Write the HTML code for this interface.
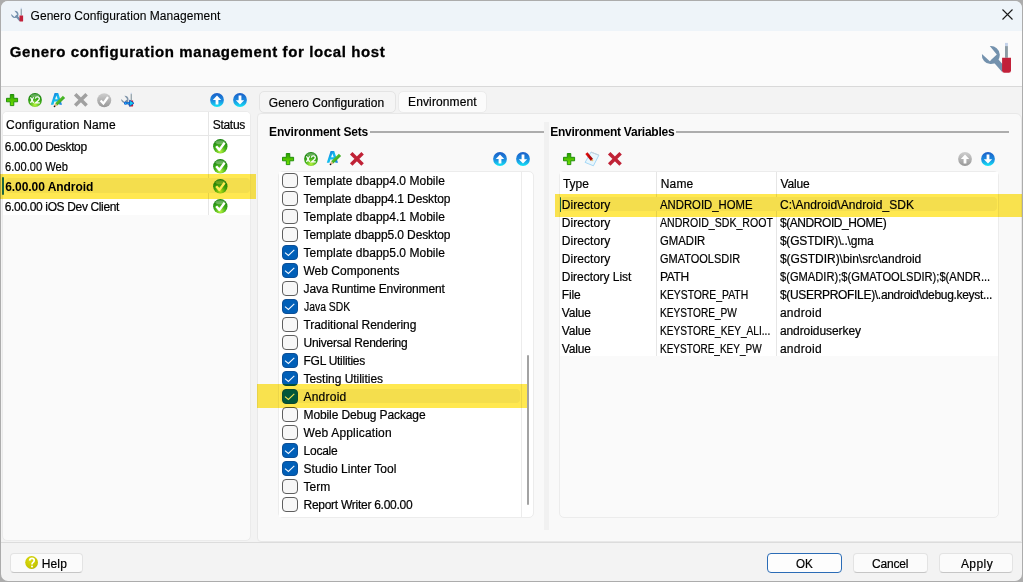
<!DOCTYPE html>
<html><head><meta charset="utf-8">
<style>
*{box-sizing:border-box;margin:0;padding:0}
html,body{width:1023px;height:582px;overflow:hidden;background:#acacac}
body{position:relative;font-family:"Liberation Sans",sans-serif;font-size:12px;color:#1a1a1a}
.a{position:absolute}
.t{position:absolute;white-space:nowrap;font-size:12px;color:#000;-webkit-text-stroke:0.2px #000}
.tb{-webkit-text-stroke:0}
.panel{position:absolute;background:#fafafa;border:1px solid #e5e5e5;border-radius:5px}
.wh{position:absolute;background:#ffffff}
.btn{position:absolute;height:20px;background:#fbfbfb;border:1px solid #e3e3e3;border-bottom-color:#c6c6c6;border-radius:4px}
.hl{position:absolute;background:#ffe850;mix-blend-mode:multiply}
.gl{position:absolute;height:2px;background:#adadad}
.cb{position:absolute;width:15.4px;height:15.2px;border:1px solid #5e5e5e;border-radius:4px;background:#f7f7f7}
.cb.on{background:#005fb8;border-color:#0d4f96}
.vl{position:absolute;width:1px;background:#e6e6e6}
.hlin{position:absolute;height:1px;background:#e6e6e6}
svg{position:absolute;overflow:visible}

</style></head><body>
<div class="a" style="left:1px;top:1px;width:1021px;height:580px;border-radius:7px;overflow:hidden;background:#f3f3f3">
<div class="a" style="left:0;top:0;width:1021px;height:30px;background:#eef4f9"></div>
<div class="a" style="left:0;top:30px;width:1021px;height:55px;background:#fbfbfb"></div>
<div class="a" style="left:0;top:85px;width:1021px;height:1px;background:#d9d9d9"></div>
<div class="a" style="left:0;top:541px;width:1021px;height:1px;background:#dcdcdc"></div>
</div>
<div class="t" style="left:30.5px;top:10px;font-size:12px;line-height:12px;color:#000;-webkit-text-stroke:0.1px #000;letter-spacing:0.059px">Genero Configuration Management</div>
<div class="t" style="left:9.8px;top:44.3px;font-size:15px;line-height:15px;font-weight:bold;-webkit-text-stroke:0;color:#000;-webkit-text-stroke:0.3px #000;letter-spacing:0.608px">Genero configuration management for local host</div>
<div class="panel" style="left:2px;top:111px;width:249px;height:430px;border-radius:5px;border-color:#ebebeb"></div>
<div class="wh" style="left:3px;top:112px;width:247px;height:103px;border-radius:4px 4px 0 0"></div>
<div class="hlin" style="left:3px;top:135px;width:247px"></div>
<div class="vl" style="left:208px;top:112px;height:103px"></div>
<div class="t" style="left:6.1px;top:119px;font-size:12px;line-height:12px;letter-spacing:0.169px">Configuration Name</div>
<div class="t" style="left:212.7px;top:119px;font-size:12px;line-height:12px;letter-spacing:-0.286px">Status</div>
<div class="t" style="left:4.8px;top:141px;font-size:12px;line-height:12px;letter-spacing:-0.365px">6.00.00 Desktop</div>
<div class="t" style="left:4.8px;top:161px;font-size:12px;line-height:12px;transform:scaleX(0.9260);transform-origin:0 0">6.00.00 Web</div>
<div class="a" style="left:5px;top:178px;width:245px;height:15px;border-radius:4px;background:#f4f4f4"></div>
<div class="a" style="left:2px;top:177px;width:1.6px;height:18px;border-radius:1px;background:#1a6fd0"></div>
<div class="t" style="left:5.2px;top:181px;font-size:12px;line-height:12px;font-weight:bold;-webkit-text-stroke:0;color:#000;letter-spacing:-0.059px">6.00.00 Android</div>
<div class="t" style="left:4.8px;top:201px;font-size:12px;line-height:12px;letter-spacing:-0.355px">6.00.00 iOS Dev Client</div>
<div class="a" style="left:259px;top:91px;width:137px;height:22px;background:#f5f5f5;border:1px solid #e4e4e4;border-radius:5px"></div>
<div class="a" style="left:398px;top:91px;width:89px;height:22px;background:#fbfbfb;border:1px solid #ebebeb;border-radius:5px"></div>
<div class="t" style="left:268.8px;top:97px;font-size:12px;line-height:12px;letter-spacing:0.029px">Genero Configuration</div>
<div class="t" style="left:408.0px;top:96px;font-size:12px;line-height:12px;letter-spacing:0.133px">Environment</div>
<div class="panel" style="left:257px;top:113px;width:765px;height:429px;background:#f9f9f9;border-color:#e8e8e8;border-radius:4px 6px 0 4px"></div>
<div class="a" style="left:544px;top:122px;width:5px;height:408px;background:#f1f1f1"></div>
<div class="t" style="left:269.1px;top:126px;font-size:12px;line-height:12px;font-weight:bold;-webkit-text-stroke:0;color:#000;letter-spacing:-0.195px">Environment Sets</div>
<div class="gl" style="left:370px;top:131px;width:174px"></div>
<div class="panel" style="left:278px;top:171px;width:256px;height:347px;background:#ffffff;border-color:#ececec;border-radius:5px"></div>
<div class="wh" style="left:279px;top:172px;width:242px;height:345px"></div>
<div class="a" style="left:521px;top:172px;width:1px;height:345px;background:#ececec"></div>
<div class="a" style="left:527px;top:355px;width:2px;height:150px;border-radius:1px;background:#a3a3a3"></div>
<div class="cb" style="left:282.2px;top:172.5px"></div>
<div class="t" style="left:303.5px;top:175px;font-size:12px;line-height:12px;letter-spacing:0.028px">Template dbapp4.0 Mobile</div>
<div class="cb" style="left:282.2px;top:190.5px"></div>
<div class="t" style="left:303.5px;top:193px;font-size:12px;line-height:12px;letter-spacing:-0.102px">Template dbapp4.1 Desktop</div>
<div class="cb" style="left:282.2px;top:208.5px"></div>
<div class="t" style="left:303.5px;top:211px;font-size:12px;line-height:12px;letter-spacing:0.028px">Template dbapp4.1 Mobile</div>
<div class="cb" style="left:282.2px;top:226.5px"></div>
<div class="t" style="left:303.5px;top:229px;font-size:12px;line-height:12px;letter-spacing:-0.102px">Template dbapp5.0 Desktop</div>
<div class="cb on" style="left:282.2px;top:244.5px"></div>
<svg style="left:282.2px;top:244.5px" width="15" height="15"><path d="M3 7.6 L6.4 10.5 L12.3 4.8" fill="none" stroke="#f4f8ff" stroke-width="1.1"/></svg>
<div class="t" style="left:303.5px;top:247px;font-size:12px;line-height:12px;letter-spacing:0.028px">Template dbapp5.0 Mobile</div>
<div class="cb on" style="left:282.2px;top:262.5px"></div>
<svg style="left:282.2px;top:262.5px" width="15" height="15"><path d="M3 7.6 L6.4 10.5 L12.3 4.8" fill="none" stroke="#f4f8ff" stroke-width="1.1"/></svg>
<div class="t" style="left:303.5px;top:265px;font-size:12px;line-height:12px;letter-spacing:0.004px">Web Components</div>
<div class="cb" style="left:282.2px;top:280.5px"></div>
<div class="t" style="left:303.5px;top:283px;font-size:12px;line-height:12px;letter-spacing:-0.116px">Java Runtime Environment</div>
<div class="cb on" style="left:282.2px;top:298.5px"></div>
<svg style="left:282.2px;top:298.5px" width="15" height="15"><path d="M3 7.6 L6.4 10.5 L12.3 4.8" fill="none" stroke="#f4f8ff" stroke-width="1.1"/></svg>
<div class="t" style="left:303.5px;top:301px;font-size:12px;line-height:12px;transform:scaleX(0.8666);transform-origin:0 0">Java SDK</div>
<div class="cb" style="left:282.2px;top:316.5px"></div>
<div class="t" style="left:303.5px;top:319px;font-size:12px;line-height:12px;letter-spacing:-0.070px">Traditional Rendering</div>
<div class="cb" style="left:282.2px;top:334.5px"></div>
<div class="t" style="left:303.5px;top:337px;font-size:12px;line-height:12px;letter-spacing:-0.252px">Universal Rendering</div>
<div class="cb on" style="left:282.2px;top:352.5px"></div>
<svg style="left:282.2px;top:352.5px" width="15" height="15"><path d="M3 7.6 L6.4 10.5 L12.3 4.8" fill="none" stroke="#f4f8ff" stroke-width="1.1"/></svg>
<div class="t" style="left:303.5px;top:355px;font-size:12px;line-height:12px;letter-spacing:-0.267px">FGL Utilities</div>
<div class="cb on" style="left:282.2px;top:370.5px"></div>
<svg style="left:282.2px;top:370.5px" width="15" height="15"><path d="M3 7.6 L6.4 10.5 L12.3 4.8" fill="none" stroke="#f4f8ff" stroke-width="1.1"/></svg>
<div class="t" style="left:303.5px;top:373px;font-size:12px;line-height:12px;letter-spacing:-0.027px">Testing Utilities</div>
<div class="a" style="left:280px;top:389px;width:240px;height:14px;border-radius:4px;background:#f4f4f4"></div>
<div class="cb on" style="left:282.2px;top:388.5px"></div>
<svg style="left:282.2px;top:388.5px" width="15" height="15"><path d="M3 7.6 L6.4 10.5 L12.3 4.8" fill="none" stroke="#f4f8ff" stroke-width="1.1"/></svg>
<div class="t" style="left:303.5px;top:391px;font-size:12px;line-height:12px;letter-spacing:0.221px">Android</div>
<div class="cb" style="left:282.2px;top:406.5px"></div>
<div class="t" style="left:303.5px;top:409px;font-size:12px;line-height:12px;letter-spacing:-0.104px">Mobile Debug Package</div>
<div class="cb" style="left:282.2px;top:424.5px"></div>
<div class="t" style="left:303.5px;top:427px;font-size:12px;line-height:12px;letter-spacing:0.161px">Web Application</div>
<div class="cb on" style="left:282.2px;top:442.5px"></div>
<svg style="left:282.2px;top:442.5px" width="15" height="15"><path d="M3 7.6 L6.4 10.5 L12.3 4.8" fill="none" stroke="#f4f8ff" stroke-width="1.1"/></svg>
<div class="t" style="left:303.5px;top:445px;font-size:12px;line-height:12px;letter-spacing:-0.235px">Locale</div>
<div class="cb on" style="left:282.2px;top:460.5px"></div>
<svg style="left:282.2px;top:460.5px" width="15" height="15"><path d="M3 7.6 L6.4 10.5 L12.3 4.8" fill="none" stroke="#f4f8ff" stroke-width="1.1"/></svg>
<div class="t" style="left:303.5px;top:463px;font-size:12px;line-height:12px;letter-spacing:0.023px">Studio Linter Tool</div>
<div class="cb" style="left:282.2px;top:478.5px"></div>
<div class="t" style="left:303.5px;top:481px;font-size:12px;line-height:12px;letter-spacing:0.043px">Term</div>
<div class="cb" style="left:282.2px;top:496.5px"></div>
<div class="t" style="left:303.5px;top:499px;font-size:12px;line-height:12px;letter-spacing:-0.270px">Report Writer 6.00.00</div>
<div class="t" style="left:550.2px;top:126px;font-size:12px;line-height:12px;font-weight:bold;-webkit-text-stroke:0;color:#000;letter-spacing:-0.250px">Environment Variables</div>
<div class="gl" style="left:676px;top:131px;width:333px"></div>
<div class="panel" style="left:559px;top:171px;width:440px;height:347px;background:#fafafa;border-color:#ececec;border-radius:5px"></div>
<div class="wh" style="left:560px;top:172px;width:438px;height:184px"></div>
<div class="vl" style="left:656px;top:172px;height:184px"></div>
<div class="vl" style="left:776px;top:172px;height:184px"></div>
<div class="t" style="left:562.9px;top:178px;font-size:12px;line-height:12px;letter-spacing:-0.005px">Type</div>
<div class="t" style="left:660.8px;top:178px;font-size:12px;line-height:12px;letter-spacing:0.161px">Name</div>
<div class="t" style="left:780.5px;top:178px;font-size:12px;line-height:12px;letter-spacing:-0.153px">Value</div>
<div class="a" style="left:561px;top:197px;width:436px;height:14px;border-radius:4px;background:#f4f4f4"></div>
<div class="a" style="left:559.5px;top:197px;width:1.6px;height:15px;border-radius:1px;background:#1a6fd0"></div>
<div class="t" style="left:561.8px;top:199px;font-size:12px;line-height:12px;letter-spacing:0.061px">Directory</div>
<div class="t" style="left:660.1px;top:199px;font-size:12px;line-height:12px;transform:scaleX(0.9441);transform-origin:0 0">ANDROID_HOME</div>
<div class="t" style="left:779.9px;top:199px;font-size:12px;line-height:12px;letter-spacing:0.069px">C:\Android\Android_SDK</div>
<div class="t" style="left:561.8px;top:217px;font-size:12px;line-height:12px;letter-spacing:0.061px">Directory</div>
<div class="t" style="left:660.1px;top:217px;font-size:12px;line-height:12px;transform:scaleX(0.8823);transform-origin:0 0">ANDROID_SDK_ROOT</div>
<div class="t" style="left:779.9px;top:217px;font-size:12px;line-height:12px;letter-spacing:-0.421px">$(ANDROID_HOME)</div>
<div class="t" style="left:561.8px;top:235px;font-size:12px;line-height:12px;letter-spacing:0.061px">Directory</div>
<div class="t" style="left:660.1px;top:235px;font-size:12px;line-height:12px;transform:scaleX(0.9423);transform-origin:0 0">GMADIR</div>
<div class="t" style="left:779.9px;top:235px;font-size:12px;line-height:12px;letter-spacing:-0.192px">$(GSTDIR)\..\gma</div>
<div class="t" style="left:561.8px;top:253px;font-size:12px;line-height:12px;letter-spacing:0.061px">Directory</div>
<div class="t" style="left:660.1px;top:253px;font-size:12px;line-height:12px;transform:scaleX(0.9157);transform-origin:0 0">GMATOOLSDIR</div>
<div class="t" style="left:779.9px;top:253px;font-size:12px;line-height:12px;letter-spacing:-0.031px">$(GSTDIR)\bin\src\android</div>
<div class="t" style="left:561.8px;top:271px;font-size:12px;line-height:12px;letter-spacing:-0.032px">Directory List</div>
<div class="t" style="left:660.1px;top:271px;font-size:12px;line-height:12px;letter-spacing:-0.378px">PATH</div>
<div class="t" style="left:779.9px;top:271px;font-size:12px;line-height:12px;transform:scaleX(0.9291);transform-origin:0 0">$(GMADIR);$(GMATOOLSDIR);$(ANDR...</div>
<div class="t" style="left:561.8px;top:289px;font-size:12px;line-height:12px;letter-spacing:-0.148px">File</div>
<div class="t" style="left:660.1px;top:289px;font-size:12px;line-height:12px;transform:scaleX(0.8638);transform-origin:0 0">KEYSTORE_PATH</div>
<div class="t" style="left:779.9px;top:289px;font-size:12px;line-height:12px;letter-spacing:-0.314px">$(USERPROFILE)\.android\debug.keyst...</div>
<div class="t" style="left:561.8px;top:307px;font-size:12px;line-height:12px;letter-spacing:-0.153px">Value</div>
<div class="t" style="left:660.1px;top:307px;font-size:12px;line-height:12px;transform:scaleX(0.8439);transform-origin:0 0">KEYSTORE_PW</div>
<div class="t" style="left:779.9px;top:307px;font-size:12px;line-height:12px;letter-spacing:0.278px">android</div>
<div class="t" style="left:561.8px;top:325px;font-size:12px;line-height:12px;letter-spacing:-0.153px">Value</div>
<div class="t" style="left:660.1px;top:325px;font-size:12px;line-height:12px;transform:scaleX(0.8444);transform-origin:0 0">KEYSTORE_KEY_ALI...</div>
<div class="t" style="left:779.9px;top:325px;font-size:12px;line-height:12px;letter-spacing:-0.074px">androiduserkey</div>
<div class="t" style="left:561.8px;top:343px;font-size:12px;line-height:12px;letter-spacing:-0.153px">Value</div>
<div class="t" style="left:660.1px;top:343px;font-size:12px;line-height:12px;transform:scaleX(0.8340);transform-origin:0 0">KEYSTORE_KEY_PW</div>
<div class="t" style="left:779.9px;top:343px;font-size:12px;line-height:12px;letter-spacing:0.278px">android</div>
<div class="btn" style="left:10px;top:553px;width:73px"></div>
<div class="t" style="left:41.7px;top:558px;font-size:12px;line-height:12px;letter-spacing:0.171px">Help</div>
<div class="btn" style="left:767px;top:553px;width:75px;border:1.5px solid #2b6cb6;background:#fdfdfd"></div>
<div class="t" style="left:795.9px;top:558px;font-size:12px;line-height:12px;transform:scaleX(0.9663);transform-origin:0 0">OK</div>
<div class="btn" style="left:853px;top:553px;width:75px"></div>
<div class="t" style="left:872.1px;top:558px;font-size:12px;line-height:12px;letter-spacing:-0.192px">Cancel</div>
<div class="btn" style="left:939px;top:553px;width:74px"></div>
<div class="t" style="left:960.9px;top:558px;font-size:12px;line-height:12px;letter-spacing:0.442px">Apply</div>
<svg width="0" height="0" style="position:absolute"><defs>
<radialGradient id="gg" cx="0.5" cy="0.85" r="0.75"><stop offset="0" stop-color="#b8f43c"/><stop offset="0.5" stop-color="#46b21c"/><stop offset="1" stop-color="#1a850e"/></radialGradient>
<linearGradient id="bg" x1="0" y1="0" x2="0" y2="1"><stop offset="0" stop-color="#1a5fc8"/><stop offset="0.55" stop-color="#1c8de0"/><stop offset="1" stop-color="#12e6f6"/></linearGradient>
<linearGradient id="gy" x1="0" y1="0" x2="0" y2="1"><stop offset="0" stop-color="#cfcfcf"/><stop offset="1" stop-color="#989898"/></linearGradient>
<radialGradient id="yg" cx="0.4" cy="0.35" r="0.75"><stop offset="0" stop-color="#dcdc10"/><stop offset="0.8" stop-color="#c4c400"/><stop offset="1" stop-color="#909000"/></radialGradient>
<linearGradient id="pg" x1="0" y1="0" x2="0" y2="1"><stop offset="0" stop-color="#2aa000"/><stop offset="1" stop-color="#74e400"/></linearGradient>
<linearGradient id="ab" x1="0" y1="0" x2="1" y2="1"><stop offset="0" stop-color="#1a62d8"/><stop offset="0.5" stop-color="#10c0ee"/><stop offset="1" stop-color="#1a7ae0"/></linearGradient>
<linearGradient id="pen" x1="0" y1="0" x2="1" y2="1"><stop offset="0" stop-color="#80e040"/><stop offset="1" stop-color="#128a10"/></linearGradient>
<linearGradient id="red" x1="0" y1="0" x2="1" y2="0"><stop offset="0" stop-color="#e01010"/><stop offset="1" stop-color="#a00000"/></linearGradient>
</defs></svg>
<svg style="left:9.9px;top:9.0px" width="13.94" height="13.12" viewBox="0 0 34 32"><path d="M10.8 4.1 A9 9 0 1 1 2.9 12 L10.8 19.3 L17.8 12.6 Z" fill="#7391ad"/><path d="M14.5 16 L25 28" stroke="#7391ad" stroke-width="5.6"/><rect x="26" y="-3" width="2.9" height="3.2" fill="#c4d2ea"/><rect x="26" y="0.20000000000000018" width="2.9" height="15.600000000000001" fill="#8c9ca5"/><path d="M23.1 15.8 H32 V28.5 Q32 30.7 29.8 30.7 H25.3 Q23.1 30.7 23.1 28.5 Z" fill="#c2213a"/></svg>
<svg style="left:1001.5px;top:9px" width="11" height="11" viewBox="0 0 11 11"><path d="M0.5 0.5 L10.5 10.5 M10.5 0.5 L0.5 10.5" stroke="#1a1a1a" stroke-width="1.1"/></svg>
<svg style="left:979px;top:42px" width="34.00" height="32.00" viewBox="0 0 34 32"><path d="M10.8 4.1 A9 9 0 1 1 2.9 12 L10.8 19.3 L17.8 12.6 Z" fill="#7391ad"/><path d="M14.5 16 L25 28" stroke="#7391ad" stroke-width="5.6"/><rect x="26" y="0.9" width="2.9" height="3.2" fill="#c4d2ea"/><rect x="26" y="4.1000000000000005" width="2.9" height="11.7" fill="#8c9ca5"/><path d="M23.1 15.8 H32 V28.5 Q32 30.7 29.8 30.7 H25.3 Q23.1 30.7 23.1 28.5 Z" fill="#c2213a"/></svg>
<svg style="left:6px;top:94px" width="13" height="13" viewBox="0 0 13 13"><path d="M4.3 0.5h3.5v3.8h3.8v3.5h-3.8v3.8h-3.5v-3.8h-3.8v-3.5h3.8z" fill="url(#pg)" stroke="#168a00" stroke-width="0.9"/></svg>
<svg style="left:28px;top:93px" width="14" height="14" viewBox="0 0 14 14"><circle cx="7" cy="7" r="6.9" fill="url(#gg)"/><ellipse cx="7" cy="2.6" rx="4.6" ry="1.6" fill="#fff" opacity="0.3"/><path d="M2.5 4.3 L5.6 9.9 M5.6 4.3 L2.5 9.9" stroke="#fff" stroke-width="1.3"/><path d="M7.3 5.6 Q7.7 3.9 9.4 3.9 Q11.3 3.9 11.3 5.7 Q11.3 6.9 9.8 7.9 L7.6 9.8 L11.8 9.8" fill="none" stroke="#fff" stroke-width="1.3"/></svg>
<svg style="left:48px;top:91px" width="20" height="18" viewBox="0 0 20 18"><path fill-rule="evenodd" d="M2.8 13.8 L6.6 2 L10.2 2 L14 13.8 L11.4 13.8 L10.4 10.6 L6.4 10.6 L5.4 13.8 Z M7.1 8.3 L9.7 8.3 L8.4 4.4 Z" fill="url(#ab)"/><path d="M7.1 12.15 L14.9 4.65 L17.1 6.95 L9.3 14.45 Z" fill="url(#pen)"/><path d="M7.1 12.15 L9.3 14.45 L6.1 15.9 Z" fill="#e8b080"/><circle cx="6.5" cy="15.4" r="0.8" fill="#111"/></svg>
<svg style="left:73px;top:92px" width="16" height="16" viewBox="0 0 16 16"><path d="M2.2 2.2 L13.6 13.6 M13.6 2.2 L2.2 13.6" stroke="#a0a0a0" stroke-width="3.5"/></svg>
<svg style="left:97px;top:93px" width="15" height="15" viewBox="0 0 15 15"><circle cx="7.2" cy="7.2" r="7" fill="url(#gy)"/><path d="M3.6 7.4 L6.4 10.4 L11 4" fill="none" stroke="#fff" stroke-width="2.2"/></svg>
<svg style="left:119.9px;top:94.0px" width="13.94" height="13.12" viewBox="0 0 34 32"><path d="M10.8 4.1 A9 9 0 1 1 2.9 12 L10.8 19.3 L17.8 12.6 Z" fill="#7e93a8"/><path d="M14.5 16 L25 28" stroke="#7e93a8" stroke-width="5.6"/><rect x="26" y="-3" width="2.9" height="3.2" fill="#c4d2ea"/><rect x="26" y="0.20000000000000018" width="2.9" height="15.600000000000001" fill="#8c9ca5"/><path d="M23.1 15.8 H32 V28.5 Q32 30.7 29.8 30.7 H25.3 Q23.1 30.7 23.1 28.5 Z" fill="#c2213a"/></svg>
<svg style="left:117px;top:90px" width="20" height="20" viewBox="0 0 20 20"><path d="M10.2 13.2 L13 13.2" stroke="#1050c8" stroke-width="2.2"/><path d="M10.4 13.2 L12.8 13.2" stroke="#18d0f4" stroke-width="0.9"/><circle cx="8.6" cy="13.2" r="1.6" fill="#1060d8"/><circle cx="8.6" cy="13.2" r="0.7" fill="#20c8f0"/><path d="M12.6 10.2 L17 13.2 L12.6 16.3 Z" fill="#14d0f4" stroke="#1050c0" stroke-width="0.8"/></svg>
<svg style="left:210px;top:93px" width="14" height="14" viewBox="0 0 14 14"><circle cx="7" cy="7" r="6.9" fill="url(#bg)"/><path d="M7 2.6 L11.2 7 L8.4 7 L8.4 11.6 L5.6 11.6 L5.6 7 L2.8 7 Z" fill="#fff"/></svg>
<svg style="left:233px;top:93px" width="14" height="14" viewBox="0 0 14 14"><circle cx="7" cy="7" r="6.9" fill="url(#bg)"/><path d="M7 11.6 L11.2 7.2 L8.4 7.2 L8.4 2.5 L5.6 2.5 L5.6 7.2 L2.8 7.2 Z" fill="#fff"/></svg>
<svg style="left:212.5px;top:138.5px" width="15" height="15" viewBox="0 0 15 15"><circle cx="7.3" cy="7.3" r="7.2" fill="url(#gg)"/><ellipse cx="7.3" cy="3.2" rx="4.8" ry="2" fill="#fff" opacity="0.3"/><path d="M3.2 7.2 L6.4 10.9 L11.6 3.8" fill="none" stroke="#fff" stroke-width="2.4" stroke-linejoin="round"/></svg>
<svg style="left:212.5px;top:158.5px" width="15" height="15" viewBox="0 0 15 15"><circle cx="7.3" cy="7.3" r="7.2" fill="url(#gg)"/><ellipse cx="7.3" cy="3.2" rx="4.8" ry="2" fill="#fff" opacity="0.3"/><path d="M3.2 7.2 L6.4 10.9 L11.6 3.8" fill="none" stroke="#fff" stroke-width="2.4" stroke-linejoin="round"/></svg>
<svg style="left:212.5px;top:178.5px" width="15" height="15" viewBox="0 0 15 15"><circle cx="7.3" cy="7.3" r="7.2" fill="url(#gg)"/><ellipse cx="7.3" cy="3.2" rx="4.8" ry="2" fill="#fff" opacity="0.3"/><path d="M3.2 7.2 L6.4 10.9 L11.6 3.8" fill="none" stroke="#fff" stroke-width="2.4" stroke-linejoin="round"/></svg>
<svg style="left:212.5px;top:198.5px" width="15" height="15" viewBox="0 0 15 15"><circle cx="7.3" cy="7.3" r="7.2" fill="url(#gg)"/><ellipse cx="7.3" cy="3.2" rx="4.8" ry="2" fill="#fff" opacity="0.3"/><path d="M3.2 7.2 L6.4 10.9 L11.6 3.8" fill="none" stroke="#fff" stroke-width="2.4" stroke-linejoin="round"/></svg>
<svg style="left:282px;top:153px" width="13" height="13" viewBox="0 0 13 13"><path d="M4.3 0.5h3.5v3.8h3.8v3.5h-3.8v3.8h-3.5v-3.8h-3.8v-3.5h3.8z" fill="url(#pg)" stroke="#168a00" stroke-width="0.9"/></svg>
<svg style="left:304px;top:152px" width="14" height="14" viewBox="0 0 14 14"><circle cx="7" cy="7" r="6.9" fill="url(#gg)"/><ellipse cx="7" cy="2.6" rx="4.6" ry="1.6" fill="#fff" opacity="0.3"/><path d="M2.5 4.3 L5.6 9.9 M5.6 4.3 L2.5 9.9" stroke="#fff" stroke-width="1.3"/><path d="M7.3 5.6 Q7.7 3.9 9.4 3.9 Q11.3 3.9 11.3 5.7 Q11.3 6.9 9.8 7.9 L7.6 9.8 L11.8 9.8" fill="none" stroke="#fff" stroke-width="1.3"/></svg>
<svg style="left:324px;top:149px" width="20" height="18" viewBox="0 0 20 18"><path fill-rule="evenodd" d="M2.8 13.8 L6.6 2 L10.2 2 L14 13.8 L11.4 13.8 L10.4 10.6 L6.4 10.6 L5.4 13.8 Z M7.1 8.3 L9.7 8.3 L8.4 4.4 Z" fill="url(#ab)"/><path d="M7.1 12.15 L14.9 4.65 L17.1 6.95 L9.3 14.45 Z" fill="url(#pen)"/><path d="M7.1 12.15 L9.3 14.45 L6.1 15.9 Z" fill="#e8b080"/><circle cx="6.5" cy="15.4" r="0.8" fill="#111"/></svg>
<svg style="left:349px;top:151px" width="16" height="16" viewBox="0 0 16 16"><path d="M2.2 2.2 L13.6 13.6 M13.6 2.2 L2.2 13.6" stroke="#c02236" stroke-width="3.5"/></svg>
<svg style="left:493px;top:152px" width="14" height="14" viewBox="0 0 14 14"><circle cx="7" cy="7" r="6.9" fill="url(#bg)"/><path d="M7 2.6 L11.2 7 L8.4 7 L8.4 11.6 L5.6 11.6 L5.6 7 L2.8 7 Z" fill="#fff"/></svg>
<svg style="left:516px;top:152px" width="14" height="14" viewBox="0 0 14 14"><circle cx="7" cy="7" r="6.9" fill="url(#bg)"/><path d="M7 11.6 L11.2 7.2 L8.4 7.2 L8.4 2.5 L5.6 2.5 L5.6 7.2 L2.8 7.2 Z" fill="#fff"/></svg>
<svg style="left:563px;top:153px" width="13" height="13" viewBox="0 0 13 13"><path d="M4.3 0.5h3.5v3.8h3.8v3.5h-3.8v3.8h-3.5v-3.8h-3.8v-3.5h3.8z" fill="url(#pg)" stroke="#168a00" stroke-width="0.9"/></svg>
<svg style="left:581px;top:149px" width="20" height="20" viewBox="0 0 20 20"><path d="M10 3.1 L17.9 6.2 L12.4 16.8 L4.1 13.4 Z" fill="#e8f6fd" stroke="#9cd4f4" stroke-width="0.9"/><path d="M10 3.1 L17.9 6.2" stroke="#c8d0d8" stroke-width="1"/><path d="M5.4 4.2 L11 11" stroke="url(#red)" stroke-width="2.8"/><path d="M10.8 10.7 L11.8 11.9" stroke="#e8c070" stroke-width="1.8"/></svg>
<svg style="left:607px;top:151px" width="16" height="16" viewBox="0 0 16 16"><path d="M2.2 2.2 L13.6 13.6 M13.6 2.2 L2.2 13.6" stroke="#c02236" stroke-width="3.5"/></svg>
<svg style="left:958px;top:152px" width="14" height="14" viewBox="0 0 14 14"><circle cx="7" cy="7" r="6.9" fill="url(#gy)"/><path d="M7 2.6 L11.2 7 L8.4 7 L8.4 11.6 L5.6 11.6 L5.6 7 L2.8 7 Z" fill="#fff"/></svg>
<svg style="left:981px;top:152px" width="14" height="14" viewBox="0 0 14 14"><circle cx="7" cy="7" r="6.9" fill="url(#bg)"/><path d="M7 11.6 L11.2 7.2 L8.4 7.2 L8.4 2.5 L5.6 2.5 L5.6 7.2 L2.8 7.2 Z" fill="#fff"/></svg>
<svg style="left:25px;top:556px" width="14" height="14" viewBox="0 0 14 14"><circle cx="6.6" cy="6.5" r="6.4" fill="url(#yg)"/><path d="M4.6 4.6 Q4.8 2.4 7 2.4 Q9.2 2.4 9.2 4.4 Q9.2 5.6 7.8 6.6 Q7 7.2 7 8.6" fill="none" stroke="#fff" stroke-width="1.7"/><circle cx="7" cy="10.6" r="1" fill="#fff"/></svg>
<div class="hl" style="left:0px;top:174px;width:256px;height:25px"></div>
<div class="hl" style="left:257px;top:384px;width:270px;height:24px"></div>
<div class="hl" style="left:555px;top:194px;width:467px;height:23px"></div>
</body></html>
